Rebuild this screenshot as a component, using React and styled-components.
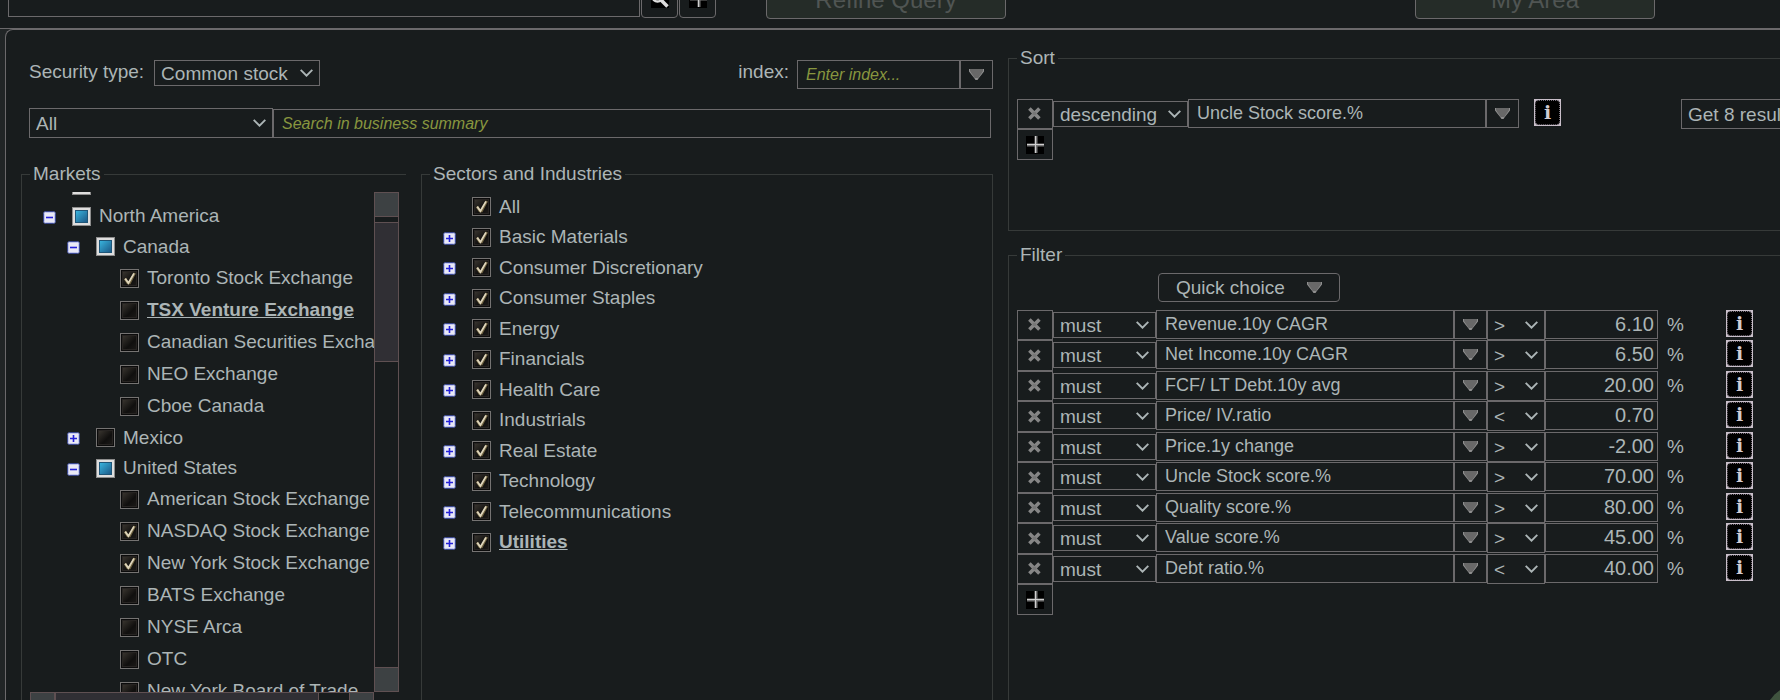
import React from "react";
import styled, { createGlobalStyle, css } from "styled-components";

const c = {
  bg: "#181c1d",
  edge: "#212526",
  line: "#6b696b",
  frame: "#363a39",
  text: "#acb5b6",
  dim: "#505553",
  hint: "#88963f",
  scrollLine: "#5f5052",
};

const Global = createGlobalStyle`
  * { box-sizing: border-box; }
  body {
    margin: 0;
    background: ${c.edge};
    color: ${c.text};
    font: 19px/22px "Liberation Sans", Arial, sans-serif;
    overflow: hidden;
  }
  button, input, select { font: inherit; color: inherit; margin: 0; }
`;

const Page = styled.div`
  display: flex;
  flex-direction: column;
  height: 100vh;
  overflow: hidden;
`;

/* top bar */
const Toolbar = styled.header`
  display: flex;
  flex: none;
  align-items: center;
  height: 50px;
  margin-top: -21px;
  padding: 0 125px 9px 8px;
  background: ${c.bg};
  border-bottom: 1px solid ${c.line};
`;

const SearchBox = styled.input`
  flex: 0 1 632px;
  min-width: 0;
  height: 36px;
  background: ${c.bg};
  border: 1px solid ${c.line};
`;

const ToolButton = styled.button`
  display: grid;
  place-items: center;
  flex: none;
  width: 37px;
  height: 38px;
  margin-left: 1px;
  padding: 0;
  background: ${c.bg};
  border: 1px solid ${c.line};
  border-radius: 4px;
`;

const NavButton = styled.button`
  flex: none;
  width: 240px;
  height: 40px;
  margin-left: ${(p) => (p.$end ? "auto" : "50px")};
  padding: 2px 0 0;
  font-size: 24px;
  color: ${c.dim};
  background: #252c28;
  border: 1px solid ${c.line};
  border-radius: 4px;
`;

/* main panel */
const Panel = styled.main`
  display: flex;
  flex: 1;
  gap: 15px;
  min-height: 0;
  margin-left: 5px;
  padding-left: 15px;
  background: ${c.bg};
  border: solid ${c.line};
  border-width: 1px 0 0 1px;
  border-radius: 8px 0 0 0;
`;

const Universe = styled.section`
  display: flex;
  flex: 1;
  flex-direction: column;
  min-width: 0;
  padding-top: 30px;
`;

const Criteria = styled.section`
  display: flex;
  flex: 0 0 772px;
  flex-direction: column;
  gap: 13px;
  min-width: 0;
  padding-top: 17px;
`;

const Line = styled.div`
  display: flex;
  align-items: flex-start;
  gap: 10px;
  padding-left: 8px;
`;

const LineLabel = styled.label`
  line-height: 24px;
`;

const IndexGroup = styled.div`
  display: flex;
  margin-left: auto;
`;

const IndexLabel = styled(LineLabel)`
  margin-right: 8px;
`;

const SummaryLine = styled.div`
  display: flex;
  align-items: flex-end;
  margin: 19px 2px 25px 8px;
`;

const Lists = styled.div`
  display: flex;
  flex: 1;
  gap: 15px;
  min-height: 0;
`;

const Group = styled.fieldset`
  min-width: 0;
  margin: 0;
  padding: ${(p) => p.$pad || "7px 7px 0 8px"};
  border: solid ${c.frame};
  border-width: 1px ${(p) => (p.$closed ? 1 : 0)}px ${(p) => (p.$base ? 1 : 0)}px 1px;
  ${(p) => p.$width && css`flex: 0 0 ${p.$width}px;`}
  ${(p) => p.$grow && css`flex: 1;`}
  ${(p) => p.$height && css`height: ${p.$height}px;`}
`;

const Legend = styled.legend`
  padding: 0 3px;
  line-height: 22px;
`;

/* form controls */
const SelectWrap = styled.span`
  display: grid;
  flex: none;
  align-items: center;
  width: ${(p) => p.$w}px;
  height: ${(p) => p.$h || 26}px;
  > * { grid-area: 1 / 1; }
  > svg { justify-self: end; margin-right: 7px; pointer-events: none; }
`;

const SelectBox = styled.select`
  appearance: none;
  width: 100%;
  height: 100%;
  padding: 1px 0 0 6px;
  background: ${c.bg};
  border: 1px solid ${c.line};
  border-radius: 0;
`;

const Field = styled.input`
  flex: ${(p) => (p.$w ? `0 0 ${p.$w}px` : "1")};
  min-width: 0;
  width: ${(p) => (p.$w ? `${p.$w}px` : "auto")};
  height: 29px;
  padding: 0 8px 1px;
  font-size: 18px;
  background: ${c.bg};
  border: 1px solid ${c.line};
  border-radius: 0;
  &::placeholder { color: ${c.hint}; font-size: 16px; font-style: italic; opacity: 1; }
`;

const NumberField = styled(Field)`
  padding: 0 3px 1px;
  font-size: 20px;
  text-align: right;
`;

const SquareButton = styled.button`
  display: grid;
  place-items: center;
  flex: none;
  width: ${(p) => p.$w || 36}px;
  height: ${(p) => p.$h || 31}px;
  padding: 0;
  background: ${c.bg};
  border: 1px solid ${c.line};
`;

const InfoButton = styled.button`
  display: grid;
  place-items: center;
  flex: none;
  width: 27px;
  height: 27px;
  padding: 0;
  background: #c9bfca;
  border: 0;
`;

const InfoFace = styled.span`
  width: 25px;
  height: 25px;
  border: 1px dotted #77707a;
  border-radius: 4px;
  background: #000;
  color: #d2cbd2;
  font: bold 19px/22px "DejaVu Serif", serif;
  text-align: center;
`;

/* criteria rows */
const Row = styled.div`
  display: flex;
  align-items: flex-start;
  height: 30px;
`;

const Rows = styled.div`
  margin-top: 8px;
  > :nth-child(even) { height: 31px; }
  > :nth-child(even) > :first-child { height: 31px; }
`;

const Lowered = styled.span`
  display: flex;
  padding-top: 2px;
`;

const Unit = styled.span`
  flex: none;
  width: 68px;
  padding-left: 9px;
  line-height: 30px;
`;

const SortInfo = styled.span`
  display: flex;
  margin: 0 120px 0 15px;
`;

const QuickChoice = styled.button`
  display: flex;
  align-items: center;
  justify-content: space-between;
  width: 182px;
  height: 29px;
  margin-left: 141px;
  padding: 0 17px;
  background: ${c.bg};
  border: 1px solid ${c.line};
  border-radius: 4px;
`;

/* trees */
const ScrollFrame = styled.div`
  display: grid;
  grid-template-columns: minmax(0, 1fr) 25px;
  grid-template-rows: 500px 25px;
`;

const TreeView = styled.div`
  overflow: hidden;
`;

const Tree = styled.ul`
  margin: ${(p) => (p.$scrolled ? "-22px 0 0" : "0")};
  padding: 0;
  list-style: none;
`;

const Node = styled.li`
  display: flex;
  align-items: center;
  height: 30px;
  padding-left: ${(p) => 13 + 24 * p.$level}px;
  white-space: nowrap;
  &:nth-child(odd) { height: 31px; }
  ${(p) => p.$leaf && css`&&& { height: 32px; }`}
`;

const Toggle = styled.button`
  display: flex;
  flex: none;
  width: 13px;
  margin-right: 16px;
  padding: 2px 0 0;
  background: none;
  border: 0;
`;

const ToggleSpace = styled.span`
  flex: none;
  width: 29px;
`;

const NodeLabel = styled.label`
  display: flex;
  align-items: center;
  gap: 8px;
`;

const NodeText = styled.span`
  ${(p) => p.$strong && css`font-weight: bold; text-decoration: underline;`}
`;

const BoxWrap = styled.span`
  display: grid;
  width: 19px;
  height: 19px;
  > * { grid-area: 1 / 1; }
  > svg { pointer-events: none; }
`;

const Box = styled.input`
  appearance: none;
  width: 19px;
  height: 19px;
`;

/* scroll bars */
const Bar = styled.div`
  display: flex;
  flex-direction: ${(p) => (p.$vertical ? "column" : "row")};
  border: 1px solid ${c.scrollLine};
`;

const BarEnd = styled.div`
  flex: 0 0 24px;
  background: #3d4143;
  border: 0 solid ${c.scrollLine};
  ${(p) => p.$last && css`margin-left: auto;`}
  ${(p) => (p.$vertical
    ? css`border-${p.$last ? "top" : "bottom"}-width: 1px; margin: ${p.$last ? "auto" : 0} 0 0;`
    : css`border-${p.$last ? "left" : "right"}-width: 1px;`)}
`;

const Thumb = styled.div`
  flex: 0 0 ${(p) => p.$size}px;
  margin-top: ${(p) => (p.$vertical ? 5 : 0)}px;
  background: #302f34;
  border: 0 solid ${c.scrollLine};
  border-width: ${(p) => (p.$vertical ? "1px 0" : "0 1px")};
`;

/* floating help bubble */
const Bubble = styled.div`
  position: fixed;
  right: -56px;
  bottom: -56px;
  width: 72px;
  height: 72px;
  border-radius: 50%;
  background: #40543f;
`;

const Chevron = () => (
  <svg width="13" height="8" viewBox="0 0 13 8" fill="none" stroke={c.text} strokeWidth="1.9">
    <path d="M.7 .9 6.5 6.7 12.3 .9" />
  </svg>
);

const Triangle = () => (
  <svg width="15" height="11" viewBox="0 0 15 11">
    <path d="M0 0H15V2.5L9.5 9.5 8.5 11H6.5L5.5 9.5 0 2.5Z" fill="#8f8f8f" />
    <path d="M1 0H14V2L9.3 9H5.7L1 2Z" fill="#686868" />
  </svg>
);

const Cross = () => (
  <svg width="14" height="14" viewBox="0 0 14 14">
    <path d="M1.4 1.4 11.4 11.4M11.4 1.4 1.4 11.4" stroke="#868686" strokeWidth="3.6" />
    <path d="M4.6 6.4H8.2" stroke="#777" strokeWidth="3" />
  </svg>
);

const Plus = () => (
  <svg width="18" height="18" viewBox="0 0 18 18">
    <rect width="18" height="18" fill="#000" />
    <path d="M10 0V17M1 9H18" stroke="#777" strokeWidth="3" />
    <path d="M9.5 0V17M1 8.5H18" stroke="#d0d0d0" strokeWidth="1" />
  </svg>
);

const Magnifier = () => (
  <svg width="18" height="18" viewBox="0 0 18 18" fill="none" stroke="#ddd">
    <rect width="18" height="18" fill="#000" stroke="none" />
    <circle cx="6.5" cy="6.5" r="5" strokeWidth="2.4" />
    <path d="M10 10 16.5 16.5" strokeWidth="3.6" />
  </svg>
);

const ToggleIcon = ({ open }) => (
  <svg width="13" height="13" viewBox="0 0 13 13">
    <rect x=".5" y=".5" width="12" height="12" rx="2" fill="#e9e9f6" stroke="#3a4890" />
    <rect x="1.5" y="1.5" width="10" height="10" rx="1" fill="none" stroke="#c0c5ee" />
    <path d={open ? "M3 6.5H10" : "M3 6.5H10M6.5 3V10"} stroke="#2420d8" strokeWidth="1.6" />
  </svg>
);

const BoxFace = ({ state }) =>
  state === "mixed" ? (
    <svg width="19" height="19" viewBox="0 0 19 19">
      <defs>
        <linearGradient id="mixedFill" x1="0" y1="0" x2="1" y2="1">
          <stop offset="0" stopColor="#38b2dc" />
          <stop offset="1" stopColor="#1c5a88" />
        </linearGradient>
      </defs>
      <rect width="19" height="19" fill="#8d8d8d" />
      <rect x="1" y="1" width="17" height="17" fill="#dedede" />
      <rect x="3" y="3" width="13" height="13" fill="#1f5577" />
      <rect x="4" y="4" width="11" height="11" fill="url(#mixedFill)" />
    </svg>
  ) : (
    <svg width="19" height="19" viewBox="0 0 19 19">
      <defs>
        <linearGradient id="plainFill" x1="0" y1="0" x2="1" y2="1">
          <stop offset="0" stopColor="#3a3630" />
          <stop offset=".6" stopColor="#100f0e" />
          <stop offset="1" stopColor="#1c1a18" />
        </linearGradient>
      </defs>
      <rect x=".5" y=".5" width="18" height="18" fill="#0b0b0b" stroke="#757372" />
      <rect x="2.5" y="2.5" width="14" height="14" fill="url(#plainFill)" stroke="#272422" />
      {state === "on" && (
        <>
          <path d="M5 9.5 7.8 14 9.6 14 14.8 4" fill="none" stroke="#6f6240" strokeWidth="2.6" />
          <path d="M5.2 9.6 8.4 14 14 4.4" fill="none" stroke="#ded5bb" strokeWidth="1.8" />
        </>
      )}
    </svg>
  );

const Select = ({ w, h, label, id, value, options = [] }) => (
  <SelectWrap $w={w} $h={h}>
    <SelectBox id={id} aria-label={label} defaultValue={value}>
      {[value, ...options].map((o) => (
        <option key={o}>{o}</option>
      ))}
    </SelectBox>
    <Chevron />
  </SelectWrap>
);

const Info = ({ about }) => (
  <InfoButton type="button" aria-label={`About ${about}`}>
    <InfoFace>i</InfoFace>
  </InfoButton>
);

const TreeNode = ({ node }) => {
  const { text, name, level, toggle, state, strong } = node;
  return (
    <Node $level={level} $leaf={level === 2}>
      {toggle ? (
        <Toggle type="button" aria-label={`${toggle === "open" ? "Collapse" : "Expand"} ${text}`}>
          <ToggleIcon open={toggle === "open"} />
        </Toggle>
      ) : (
        <ToggleSpace />
      )}
      <NodeLabel>
        <BoxWrap>
          <Box type="checkbox" defaultChecked={state === "on"} aria-label={name} />
          <BoxFace state={state} />
        </BoxWrap>
        {text && <NodeText $strong={strong}>{text}</NodeText>}
      </NodeLabel>
    </Node>
  );
};

const markets = [
  { name: "All markets", level: 0, state: "mixed" },
  { text: "North America", level: 0, toggle: "open", state: "mixed" },
  { text: "Canada", level: 1, toggle: "open", state: "mixed" },
  { text: "Toronto Stock Exchange", level: 2, state: "on" },
  { text: "TSX Venture Exchange", level: 2, strong: true },
  { text: "Canadian Securities Exchange", level: 2 },
  { text: "NEO Exchange", level: 2 },
  { text: "Cboe Canada", level: 2 },
  { text: "Mexico", level: 1, toggle: "closed" },
  { text: "United States", level: 1, toggle: "open", state: "mixed" },
  { text: "American Stock Exchange", level: 2 },
  { text: "NASDAQ Stock Exchange", level: 2, state: "on" },
  { text: "New York Stock Exchange", level: 2, state: "on" },
  { text: "BATS Exchange", level: 2 },
  { text: "NYSE Arca", level: 2 },
  { text: "OTC", level: 2 },
  { text: "New York Board of Trade", level: 2 },
];

const sectors = [
  "All", "Basic Materials", "Consumer Discretionary", "Consumer Staples", "Energy", "Financials",
  "Health Care", "Industrials", "Real Estate", "Technology", "Telecommunications", "Utilities",
].map((text) => ({
  text,
  level: 0,
  state: "on",
  toggle: text === "All" ? null : "closed",
  strong: text === "Utilities",
}));

const filters = [
  ["Revenue.10y CAGR", ">", "6.10", "%"],
  ["Net Income.10y CAGR", ">", "6.50", "%"],
  ["FCF/ LT Debt.10y avg", ">", "20.00", "%"],
  ["Price/ IV.ratio", "<", "0.70", ""],
  ["Price.1y change", ">", "-2.00", "%"],
  ["Uncle Stock score.%", ">", "70.00", "%"],
  ["Quality score.%", ">", "80.00", "%"],
  ["Value score.%", ">", "45.00", "%"],
  ["Debt ratio.%", "<", "40.00", "%"],
];

const FilterRow = ({ name, op, amount, unit }) => (
  <Row>
    <SquareButton type="button" $h={30} aria-label={`Remove ${name}`}>
      <Cross />
    </SquareButton>
    <Lowered>
      <Select w={103} label={`${name} requirement`} value="must" />
    </Lowered>
    <Field $w={298} aria-label="Filter metric" defaultValue={name} />
    <SquareButton type="button" $w={33} $h={29} aria-label={`Choose metric for ${name}`}>
      <Triangle />
    </SquareButton>
    <Select w={58} h={30} label={`${name} operator`} value={op} />
    <NumberField $w={113} aria-label={`${name} value`} defaultValue={amount} />
    <Unit>{unit}</Unit>
    <Info about={name} />
  </Row>
);

export default function App() {
  return (
    <Page>
      <Global />
      <Toolbar>
        <SearchBox aria-label="Search stocks" />
        <ToolButton type="button" aria-label="Search"><Magnifier /></ToolButton>
        <ToolButton type="button" aria-label="Add"><Plus /></ToolButton>
        <NavButton type="button">Refine Query</NavButton>
        <NavButton type="button" $end>My Area</NavButton>
      </Toolbar>

      <Panel>
        <Universe>
          <Line>
            <LineLabel htmlFor="security">Security type:</LineLabel>
            <Select id="security" w={166} value="Common stock" />
            <IndexGroup>
              <IndexLabel htmlFor="index">index:</IndexLabel>
              <Field id="index" $w={163} placeholder="Enter index..." />
              <SquareButton type="button" $w={33} $h={29} aria-label="Choose index">
                <Triangle />
              </SquareButton>
            </IndexGroup>
          </Line>
          <SummaryLine>
            <Select w={244} h={30} label="Summary scope" value="All" />
            <Field aria-label="Business summary" placeholder="Search in business summary" />
          </SummaryLine>

          <Lists>
            <Group $width={385}>
              <Legend>Markets</Legend>
              <ScrollFrame>
                <TreeView>
                  <Tree $scrolled>
                    {markets.map((m) => <TreeNode key={m.text || m.name} node={m} />)}
                  </Tree>
                </TreeView>
                <Bar $vertical>
                  <BarEnd $vertical />
                  <Thumb $vertical $size={140} />
                  <BarEnd $vertical $last />
                </Bar>
                <Bar>
                  <BarEnd />
                  <Thumb $size={264} />
                  <BarEnd $last />
                </Bar>
              </ScrollFrame>
            </Group>
            <Group $grow $closed $pad="6px 7px 0 8px">
              <Legend>Sectors and Industries</Legend>
              <Tree>
                {sectors.map((s) => <TreeNode key={s.text} node={s} />)}
              </Tree>
            </Group>
          </Lists>
        </Universe>

        <Criteria>
          <Group $base $height={184} $pad="30px 0 0 8px">
            <Legend>Sort</Legend>
            <Row>
              <SquareButton type="button" $h={30} aria-label="Remove sort"><Cross /></SquareButton>
              <Lowered>
                <Select w={135} label="Sort order" value="descending" options={["ascending"]} />
              </Lowered>
              <Field $w={298} aria-label="Sort metric" defaultValue="Uncle Stock score.%" />
              <SquareButton type="button" $w={33} $h={29} aria-label="Choose sort metric">
                <Triangle />
              </SquareButton>
              <SortInfo><Info about="Uncle Stock score" /></SortInfo>
              <Select w={165} h={30} label="Result count" value="Get 8 results" />
            </Row>
            <SquareButton type="button" aria-label="Add sort"><Plus /></SquareButton>
          </Group>

          <Group $grow $pad="7px 0 0 8px">
            <Legend>Filter</Legend>
            <QuickChoice type="button">
              Quick choice
              <Triangle />
            </QuickChoice>
            <Rows>
              {filters.map(([name, op, amount, unit]) => (
                <FilterRow key={name} name={name} op={op} amount={amount} unit={unit} />
              ))}
            </Rows>
            <SquareButton type="button" aria-label="Add filter"><Plus /></SquareButton>
          </Group>
        </Criteria>
      </Panel>
      <Bubble />
    </Page>
  );
}
